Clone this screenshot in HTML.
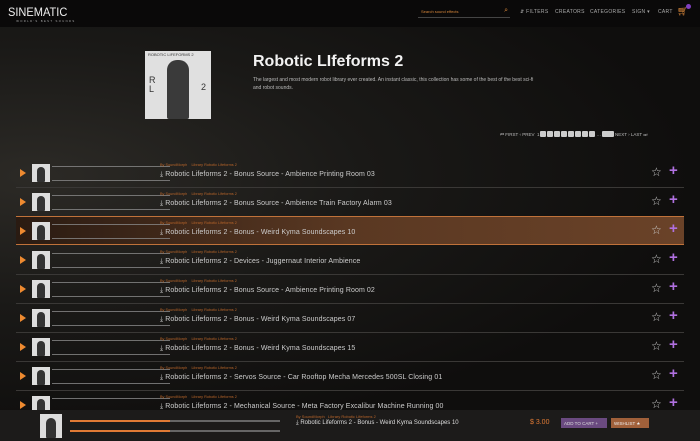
<!DOCTYPE html>
<html><head><style>
*{margin:0;padding:0;box-sizing:border-box}
body{width:700px;height:441px;overflow:hidden;background:#121110;font-family:"Liberation Sans",sans-serif;color:#ddd;position:relative}
.bg{position:absolute;inset:0;background:radial-gradient(ellipse at 5% 40%,#2c2a26 0%,#1a1917 35%,#0f0e0d 70%)}
.hdr{position:absolute;left:0;top:0;width:700px;height:27px;background:#0a0909}
.logo{position:absolute;left:8px;top:5px;font-size:12px;color:#eee;letter-spacing:0px;transform:scaleX(0.92);transform-origin:left}
.logo small{display:block;font-size:3px;letter-spacing:1.5px;color:#aaa;margin-left:9px;margin-top:0px}
.nav{position:absolute;top:9px;font-size:5px;color:#aaa;letter-spacing:.3px}
.search{position:absolute;left:418px;top:6px;width:92px;height:12px;border-bottom:1px solid #444;font-size:4px;color:#d8873a;padding:3px 3px}
.cover{position:absolute;left:145px;top:51px;width:66px;height:68px;background:#e0e0e0;overflow:hidden}
h1{position:absolute;left:253px;top:53px;font-size:16px;color:#f2f2f2;font-weight:bold}
.desc{position:absolute;left:253px;top:76px;width:290px;font-size:5px;line-height:8px;color:#bbb}
.pag{position:absolute;left:500px;top:131px;font-size:4.5px;color:#bbb;display:flex;gap:1px;align-items:center}
.pag b{display:inline-block;width:6px;height:6px;background:#ccc;border-radius:1px}
.row{position:absolute;left:16px;width:668px;height:29px;border-bottom:1px solid #3a3836}
.row.hl{background:linear-gradient(90deg,#2a1b12,#5a3822 50%,#6a4228);border-top:1px solid #c0723a;border-bottom:1px solid #c0723a}
.play{position:absolute;left:4px;top:10px;width:0;height:0;border-left:6px solid #ee8a30;border-top:4px solid transparent;border-bottom:4px solid transparent}
.th{position:absolute;left:16px;top:5px;width:18px;height:18px;background:#ddd}
.th:after{content:"";position:absolute;left:5px;top:3px;width:8px;height:15px;background:#333;border-radius:4px 4px 1px 1px}
.wave{position:absolute;left:36px;top:7px;width:118px;height:15px;border-top:1px solid #888;border-bottom:1px solid #888;opacity:.8}
.meta{position:absolute;left:144px;top:4px;font-size:3.8px;color:#b8652a}
.t{position:absolute;left:144px;top:12px;font-size:7px;color:#ccc;letter-spacing:.1px;white-space:nowrap}
.star{position:absolute;left:635px;top:6px;font-size:12px;color:#ccc}
.plus{position:absolute;left:653px;top:3px;font-size:15px;color:#b070e0;font-weight:bold}
.bar{position:absolute;left:0;top:410px;width:700px;height:31px;background:#1c1b1a}
</style></head><body>
<div class="bg"></div>
<div class="hdr">
<div class="logo">SINEMATIC<small>WORLD'S BEST SOUNDS</small></div>
<div class="search">Search sound effects<span style="position:absolute;right:2px;top:1px;color:#d8873a;font-size:7px">⌕</span></div>
<div class="nav" style="left:520px">⇵ FILTERS</div>
<div class="nav" style="left:555px">CREATORS</div>
<div class="nav" style="left:590px">CATEGORIES</div>
<div class="nav" style="left:632px">SIGN ▾</div>
<div class="nav" style="left:658px">CART</div>
<div style="position:absolute;left:677px;top:6px;color:#d8873a;font-size:9px">🛒︎</div>
<div style="position:absolute;left:686px;top:4px;width:5px;height:5px;border-radius:50%;background:#8040c0"></div>
</div>
<div class="cover"><div style="font-size:4px;color:#333;padding:1px 3px">ROBOTIC LIFEFORMS 2</div>
<div style="position:absolute;left:22px;top:9px;width:22px;height:59px;background:#3a3a3a;border-radius:10px 10px 2px 2px"></div>
<div style="position:absolute;left:4px;top:25px;font-size:9px;color:#333;line-height:9px">R<br>L</div>
<div style="position:absolute;left:56px;top:31px;font-size:9px;color:#333">2</div></div>
<h1>Robotic LIfeforms 2</h1>
<div class="desc">The largest and most modern robot library ever created. An instant classic, this collection has some of the best of the best sci-fi and robot sounds.</div>
<div class="pag">⏮ FIRST ‹ PREV &nbsp;1 <b></b><b></b><b></b><b></b><b></b><b></b><b></b><b></b> … <b style="width:12px"></b> NEXT › LAST ⏭</div>

<div class="row" style="top:159px"><div class="play"></div><div class="th"></div><div class="wave"></div><div class="meta">By SoundMorph &nbsp;&nbsp; Library Robotic Lifeforms 2</div><div class="t">⤓ Robotic Lifeforms 2 - Bonus Source - Ambience Printing Room 03</div><div class="star">☆</div><div class="plus">+</div></div>
<div class="row" style="top:188px"><div class="play"></div><div class="th"></div><div class="wave"></div><div class="meta">By SoundMorph &nbsp;&nbsp; Library Robotic Lifeforms 2</div><div class="t">⤓ Robotic Lifeforms 2 - Bonus Source - Ambience Train Factory Alarm 03</div><div class="star">☆</div><div class="plus">+</div></div>
<div class="row hl" style="top:216px"><div class="play"></div><div class="th"></div><div class="wave"></div><div class="meta">By SoundMorph &nbsp;&nbsp; Library Robotic Lifeforms 2</div><div class="t">⤓ Robotic Lifeforms 2 - Bonus - Weird Kyma Soundscapes 10</div><div class="star">☆</div><div class="plus">+</div></div>
<div class="row" style="top:246px"><div class="play"></div><div class="th"></div><div class="wave"></div><div class="meta">By SoundMorph &nbsp;&nbsp; Library Robotic Lifeforms 2</div><div class="t">⤓ Robotic Lifeforms 2 - Devices - Juggernaut Interior Ambience</div><div class="star">☆</div><div class="plus">+</div></div>
<div class="row" style="top:275px"><div class="play"></div><div class="th"></div><div class="wave"></div><div class="meta">By SoundMorph &nbsp;&nbsp; Library Robotic Lifeforms 2</div><div class="t">⤓ Robotic Lifeforms 2 - Bonus Source - Ambience Printing Room 02</div><div class="star">☆</div><div class="plus">+</div></div>
<div class="row" style="top:304px"><div class="play"></div><div class="th"></div><div class="wave"></div><div class="meta">By SoundMorph &nbsp;&nbsp; Library Robotic Lifeforms 2</div><div class="t">⤓ Robotic Lifeforms 2 - Bonus - Weird Kyma Soundscapes 07</div><div class="star">☆</div><div class="plus">+</div></div>
<div class="row" style="top:333px"><div class="play"></div><div class="th"></div><div class="wave"></div><div class="meta">By SoundMorph &nbsp;&nbsp; Library Robotic Lifeforms 2</div><div class="t">⤓ Robotic Lifeforms 2 - Bonus - Weird Kyma Soundscapes 15</div><div class="star">☆</div><div class="plus">+</div></div>
<div class="row" style="top:362px"><div class="play"></div><div class="th"></div><div class="wave"></div><div class="meta">By SoundMorph &nbsp;&nbsp; Library Robotic Lifeforms 2</div><div class="t">⤓ Robotic Lifeforms 2 - Servos Source - Car Rooftop Mecha Mercedes 500SL Closing 01</div><div class="star">☆</div><div class="plus">+</div></div>
<div class="row" style="top:391px;border:none"><div class="play"></div><div class="th"></div><div class="wave"></div><div class="meta">By SoundMorph &nbsp;&nbsp; Library Robotic Lifeforms 2</div><div class="t">⤓ Robotic Lifeforms 2 - Mechanical Source - Meta Factory Excalibur Machine Running 00</div><div class="star">☆</div><div class="plus">+</div></div>

<div class="bar">
<div style="position:absolute;left:40px;top:4px;width:22px;height:24px;background:#ddd"><div style="position:absolute;left:6px;top:4px;width:10px;height:20px;background:#333;border-radius:5px 5px 1px 1px"></div></div>
<div style="position:absolute;left:70px;top:6px;width:100px;height:20px;background:linear-gradient(#0000 20%,#e07a35 20%,#e07a35 30%,#0000 30%,#0000 70%,#e07a35 70%,#e07a35 80%,#0000 80%)"></div>
<div style="position:absolute;left:170px;top:6px;width:110px;height:20px;background:linear-gradient(#0000 20%,#666 20%,#666 30%,#0000 30%,#0000 70%,#666 70%,#666 80%,#0000 80%)"></div>
<div style="position:absolute;left:296px;top:4px;font-size:4px;color:#b8652a">By SoundMorph &nbsp; Library Robotic Lifeforms 2</div>
<div style="position:absolute;left:296px;top:10px;font-size:6px;color:#ddd">⤓ Robotic Lifeforms 2 - Bonus - Weird Kyma Soundscapes 10</div>
<div style="position:absolute;left:530px;top:9px;font-size:7px;color:#e07a35">$ 3.00</div>
<div style="position:absolute;left:561px;top:8px;width:46px;height:10px;background:#6a4a80;font-size:4.5px;color:#ddd;padding:3px 3px">ADD TO CART +</div>
<div style="position:absolute;left:611px;top:8px;width:38px;height:10px;background:#a0603a;font-size:4.5px;color:#eee;padding:3px 3px">WISHLIST ★</div>
</div>
</body></html>
